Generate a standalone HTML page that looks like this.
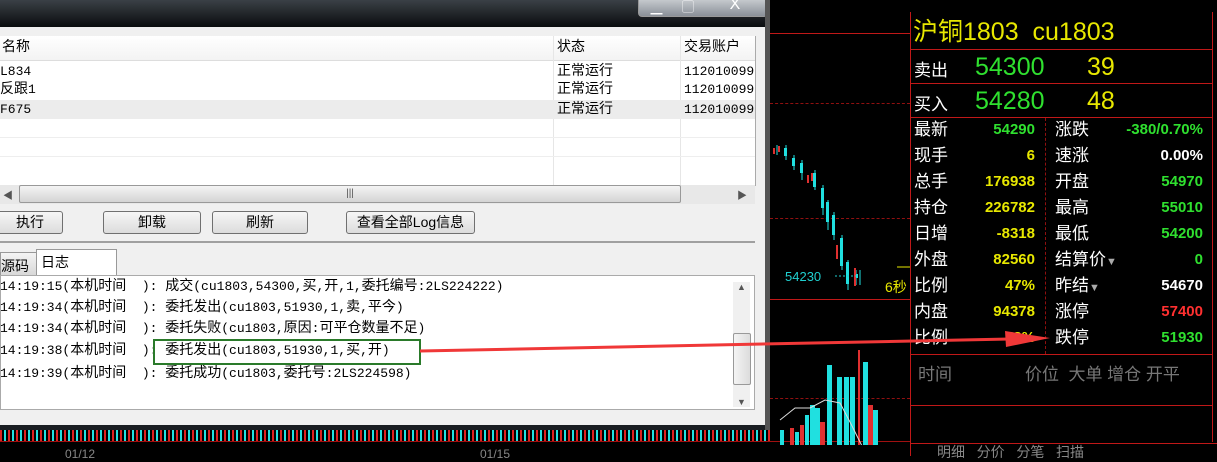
<!DOCTYPE html><html><head><meta charset="utf-8"><style>
body{margin:0;width:1217px;height:456px;background:#000;position:relative;overflow:hidden;font-family:"Liberation Sans","Noto Sans CJK SC",sans-serif}
.a{position:absolute;white-space:nowrap}
.win{position:absolute;left:0;top:0;width:770px;height:430px;background:#1a1e22}
.body{position:absolute;left:0;top:27px;width:765px;height:398px;background:#f0f0f0}
.t{font-family:"Liberation Mono","WenQuanYi Zen Hei",monospace;font-size:13px;line-height:18px;color:#000}
.t span{font-size:14px}
.btn{position:absolute;top:184px;height:21px;border:1px solid #707070;border-radius:3px;background:linear-gradient(#f6f6f6,#dcdcdc);font-size:14px;text-align:center;line-height:21px}
.y{color:#e8e800}.g{color:#2fe02f}.w{color:#fff}.r{color:#ff3030}
.lab{font-size:17px;color:#fff;line-height:26px}
.num{font-size:15px;font-weight:bold;text-align:right;line-height:26px}
</style></head><body>
<div class="a" style="left:0;top:426px;width:770px;height:16px;background:repeating-linear-gradient(90deg,#e02020 0 2px,#000 2px 4px,#20e0e0 4px 6px,#000 6px 8px)"></div>
<div class="a" style="left:0;top:441px;width:910px;height:1px;background:#a01010"></div>
<div class="a" style="left:65px;top:447px;font-size:12px;color:#888">01/12</div>
<div class="a" style="left:480px;top:447px;font-size:12px;color:#888">01/15</div>
<div class="a" style="left:770px;top:33px;width:140px;height:1px;background:#c01818"></div>
<div class="a" style="left:770px;top:103px;width:140px;border-top:1px dashed #901010"></div>
<div class="a" style="left:770px;top:218px;width:140px;border-top:1px dashed #901010"></div>
<div class="a" style="left:770px;top:299px;width:140px;height:1px;background:#c01818"></div>
<div class="a" style="left:770px;top:398px;width:140px;border-top:1px dashed #901010"></div>
<svg class="a" style="left:770px;top:140px" width="140" height="305">
<g stroke="#20e0e0" stroke-width="1"><line x1="7" y1="5" x2="7" y2="15"/><line x1="16" y1="5" x2="16" y2="20"/><line x1="24" y1="15" x2="24" y2="30"/><line x1="32" y1="20" x2="32" y2="40"/><line x1="45" y1="30" x2="45" y2="50"/><line x1="53" y1="45" x2="53" y2="75"/><line x1="58" y1="60" x2="58" y2="90"/><line x1="64" y1="72" x2="64" y2="100"/><line x1="72" y1="95" x2="72" y2="130"/><line x1="78" y1="120" x2="78" y2="150"/><line x1="86" y1="130" x2="86" y2="145"/><line x1="90" y1="130" x2="90" y2="145"/></g>
<g fill="#20e0e0"><rect x="14" y="8" width="3" height="8"/><rect x="22" y="18" width="3" height="8"/><rect x="30" y="23" width="3" height="10"/><rect x="43" y="33" width="3" height="14"/><rect x="51" y="48" width="3" height="20"/><rect x="56" y="62" width="3" height="20"/><rect x="62" y="75" width="3" height="20"/><rect x="70" y="98" width="3" height="28"/><rect x="76" y="122" width="3" height="22"/><rect x="86" y="134" width="2" height="4"/>
<rect x="57" y="225" width="5" height="80"/><rect x="67" y="237" width="5" height="68"/><rect x="74" y="237" width="5" height="68"/><rect x="80" y="237" width="5" height="68"/><rect x="93" y="222" width="5" height="83"/><rect x="40" y="265" width="5" height="40"/><rect x="45" y="268" width="5" height="37"/><rect x="103" y="270" width="5" height="35"/><rect x="10" y="290" width="4" height="15"/><rect x="25" y="292" width="4" height="13"/><rect x="35" y="275" width="4" height="30"/></g>
<g fill="#e03030"><rect x="3" y="8" width="2" height="6"/><rect x="8" y="6" width="2" height="6"/><rect x="37" y="35" width="2" height="8"/><rect x="41" y="33" width="2" height="8"/><rect x="66" y="105" width="2" height="14"/><rect x="84" y="128" width="2" height="18"/><rect x="88" y="210" width="2" height="95"/><rect x="98" y="265" width="5" height="40"/><rect x="50" y="282" width="5" height="23"/><rect x="20" y="288" width="4" height="17"/><rect x="30" y="285" width="4" height="20"/></g>
<polyline points="10,280 25,268 40,268 55,260 70,263 80,282 95,312" fill="none" stroke="#ddd" stroke-width="1"/>
<text x="15" y="141" fill="#20d0d0" font-size="13" font-family="Liberation Sans">54230</text>
<line x1="65" y1="136" x2="86" y2="136" stroke="#20d0d0" stroke-dasharray="2,2"/>
<line x1="127" y1="127" x2="140" y2="127" stroke="#e8e800"/>
<text x="115" y="152" fill="#e8e800" font-size="14" font-family="Liberation Sans,Noto Sans CJK SC">6秒</text>
</svg>
<div class="a" style="left:910px;top:12px;width:1px;height:444px;background:#c01818"></div>
<div class="a" style="left:1212px;top:12px;width:1px;height:430px;background:#c01818"></div>
<div class="a y" style="left:913px;top:16px;font-size:25px;line-height:32px">沪铜1803&nbsp;&nbsp;cu1803</div>
<div class="a" style="left:911px;top:49px;width:301px;height:1px;background:#c01818"></div>
<div class="a" style="left:911px;top:83px;width:301px;height:1px;background:#c01818"></div>
<div class="a" style="left:911px;top:117px;width:301px;height:1px;background:#c01818"></div>
<div class="a lab" style="left:914px;top:58px">卖出</div><div class="a g" style="left:975px;top:52px;font-size:25px;line-height:30px">54300</div><div class="a y" style="left:1087px;top:52px;font-size:25px;line-height:30px">39</div>
<div class="a lab" style="left:914px;top:92px">买入</div><div class="a g" style="left:975px;top:86px;font-size:25px;line-height:30px">54280</div><div class="a y" style="left:1087px;top:86px;font-size:25px;line-height:30px">48</div>
<div class="a" style="left:1045px;top:118px;width:1px;height:236px;border-left:1px dashed #901010"></div>
<div class="a" style="left:911px;top:354px;width:301px;height:1px;background:#c01818"></div>
<div class="a" style="left:911px;top:405px;width:301px;height:1px;background:#c01818"></div>
<div class="a" style="left:911px;top:443px;width:306px;height:1px;background:#c01818"></div>
<div class="a" style="left:918px;top:360px;font-size:17px;color:#777">时间</div>
<div class="a" style="left:1025px;top:360px;font-size:17px;color:#777">价位&nbsp;&nbsp;大单 增仓&nbsp;开平</div>
<div class="a" style="left:937px;top:442px;font-size:14px;color:#888">明细 &nbsp;&nbsp;分价 &nbsp;&nbsp;分笔 &nbsp;&nbsp;扫描</div>
<div id="grid"></div>
<div class="win">
<div class="a" style="left:0;top:0;width:770px;height:27px;background:linear-gradient(#3a4046,#0a0c0e)"></div>
<div class="a" style="left:638px;top:-2px;width:128px;height:17px;border:1px solid #999;border-radius:0 0 4px 4px;background:linear-gradient(#c8ccd0,#8a9098)"></div>
<div class="a" style="left:640px;top:0;width:33px;height:15px;color:#fff;text-align:center;font-size:12px">▁</div>
<div class="a" style="left:676px;top:-2px;width:24px;color:#fff;text-align:center;font-size:12px">▢</div>
<div class="a" style="left:705px;top:-4px;width:60px;color:#fff;text-align:center;font-size:16px">X</div>
<div class="body">
<div class="a" style="left:0;top:9px;width:755px;height:150px;background:#fff;border-right:1px solid #aaa"></div>
<div class="a" style="left:0;top:9px;width:755px;height:24px;background:linear-gradient(#fff,#f3f3f3);border-bottom:1px solid #ddd"></div>
<div class="a" style="left:553px;top:9px;width:1px;height:150px;background:#e6e6e6"></div>
<div class="a" style="left:680px;top:9px;width:1px;height:150px;background:#e6e6e6"></div>
<div class="a" style="left:0;top:73px;width:755px;height:19px;background:#ececec"></div>
<div class="a" style="left:0;top:110px;width:755px;height:1px;background:#eee"></div>
<div class="a" style="left:0;top:129px;width:755px;height:1px;background:#eee"></div>
<div class="a t" style="left:2px;top:12px;font-size:14px">名称</div><div class="a t" style="left:557px;top:12px;font-size:14px">状态</div><div class="a t" style="left:684px;top:12px;font-size:14px">交易账户</div>
<div class="a t" style="left:0;top:36px">L834</div><div class="a t" style="left:557px;top:36px"><span>正常运行</span></div><div class="a t" style="left:684px;top:36px;width:70px;overflow:hidden">1120100999</div>
<div class="a t" style="left:0;top:54px"><span>反跟</span>1</div><div class="a t" style="left:557px;top:54px"><span>正常运行</span></div><div class="a t" style="left:684px;top:54px;width:70px;overflow:hidden">1120100999</div>
<div class="a t" style="left:0;top:74px">F675</div><div class="a t" style="left:557px;top:74px"><span>正常运行</span></div><div class="a t" style="left:684px;top:74px;width:70px;overflow:hidden">1120100999</div>
<div class="a" style="left:0;top:158px;width:755px;height:19px;background:#e8e8e8"></div>
<div class="a" style="left:19px;top:158px;width:660px;height:16px;border:1px solid #999;border-radius:2px;background:linear-gradient(#f4f4f4,#d4d4d4);font-size:10px;text-align:center;line-height:16px;color:#555">|||</div>
<div class="a" style="left:3px;top:160px;font-size:10px;color:#555">◀</div><div class="a" style="left:737px;top:160px;font-size:10px;color:#555">▶</div>
<div class="btn" style="left:-3px;width:64px">执行</div>
<div class="btn" style="left:103px;width:96px">卸载</div>
<div class="btn" style="left:212px;width:94px">刷新</div>
<div class="btn" style="left:346px;width:127px">查看全部Log信息</div>
<div class="a" style="left:0;top:214px;width:755px;height:2px;background:#a0a0a0"></div>
<div class="a" style="left:0;top:225px;width:36px;height:22px;background:linear-gradient(#f4f4f4,#d8d8d8);border:1px solid #999;font-size:14px;line-height:26px">源码</div>
<div class="a" style="left:36px;top:222px;width:81px;height:27px;background:#fff;border:1px solid #999;border-bottom:none;font-size:14px;line-height:24px;padding-left:4px;box-sizing:border-box">日志</div>
<div class="a" style="left:0;top:248px;width:755px;height:135px;background:#fff;border:1px solid #aaa;box-sizing:border-box"></div>
<div class="a" style="left:733px;top:255px;width:17px;height:125px;background:#f0f0f0"></div>
<div class="a" style="left:733px;top:306px;width:16px;height:50px;border:1px solid #999;border-radius:2px;background:linear-gradient(90deg,#f4f4f4,#dcdcdc)"></div>
<div class="a" style="left:737px;top:255px;font-size:9px;color:#555">▲</div><div class="a" style="left:737px;top:370px;font-size:9px;color:#555">▼</div>
<div id="log"></div>
<div class="a" style="left:153px;top:312px;width:264px;height:22px;border:2px solid #2a7a2a"></div>
</div>
<div class="a" style="left:765px;top:0;width:5px;height:430px;background:#555"></div>
</div>
<svg class="a" style="left:0;top:0" width="1217" height="456"><line x1="420" y1="351" x2="1010" y2="339" stroke="#f03838" stroke-width="3"/><polygon points="1050,338 1005,331 1006,347" fill="#f03838"/></svg>
<script>
var L=[["最新","54290","g"],["现手","6","y"],["总手","176938","y"],["持仓","226782","y"],["日增","-8318","y"],["外盘","82560","y"],["比例","47%","y"],["内盘","94378","y"],["比例","53%","y"]];
var R=[["涨跌","-380/0.70%","g"],["速涨","0.00%","w"],["开盘","54970","g"],["最高","55010","g"],["最低","54200","g"],["结算价<span style='font-size:11px;color:#aaa'>▼</span>","0","g"],["昨结<span style='font-size:11px;color:#aaa'>▼</span>","54670","w"],["涨停","57400","r"],["跌停","51930","g"]];
var h="";for(var i=0;i<9;i++){var y=117+i*26;h+='<div class="a lab" style="left:914px;top:'+y+'px">'+L[i][0]+'</div><div class="a num '+L[i][2]+'" style="left:960px;width:75px;top:'+y+'px">'+L[i][1]+'</div><div class="a lab" style="left:1055px;top:'+y+'px">'+R[i][0]+'</div><div class="a num '+R[i][2]+'" style="left:1100px;width:103px;top:'+y+'px">'+R[i][1]+'</div>';}
document.getElementById("grid").innerHTML=h;
var lines=["14:19:15(本机时间  ): 成交(cu1803,54300,买,开,1,委托编号:2LS224222)","14:19:34(本机时间  ): 委托发出(cu1803,51930,1,卖,平今)","14:19:34(本机时间  ): 委托失败(cu1803,原因:可平仓数量不足)","14:19:38(本机时间  ): 委托发出(cu1803,51930,1,买,开)","14:19:39(本机时间  ): 委托成功(cu1803,委托号:2LS224598)"];
var tops=[251,272,293,315,338],o="";
for(var j=0;j<5;j++){o+='<div class="a t" style="left:0;top:'+tops[j]+'px">'+lines[j].replace(/ /g,"&nbsp;").replace(/([\u4e00-\u9fff]+)/g,"<span>$1</span>")+'</div>';}
document.getElementById("log").innerHTML=o;
</script>
</body></html>
